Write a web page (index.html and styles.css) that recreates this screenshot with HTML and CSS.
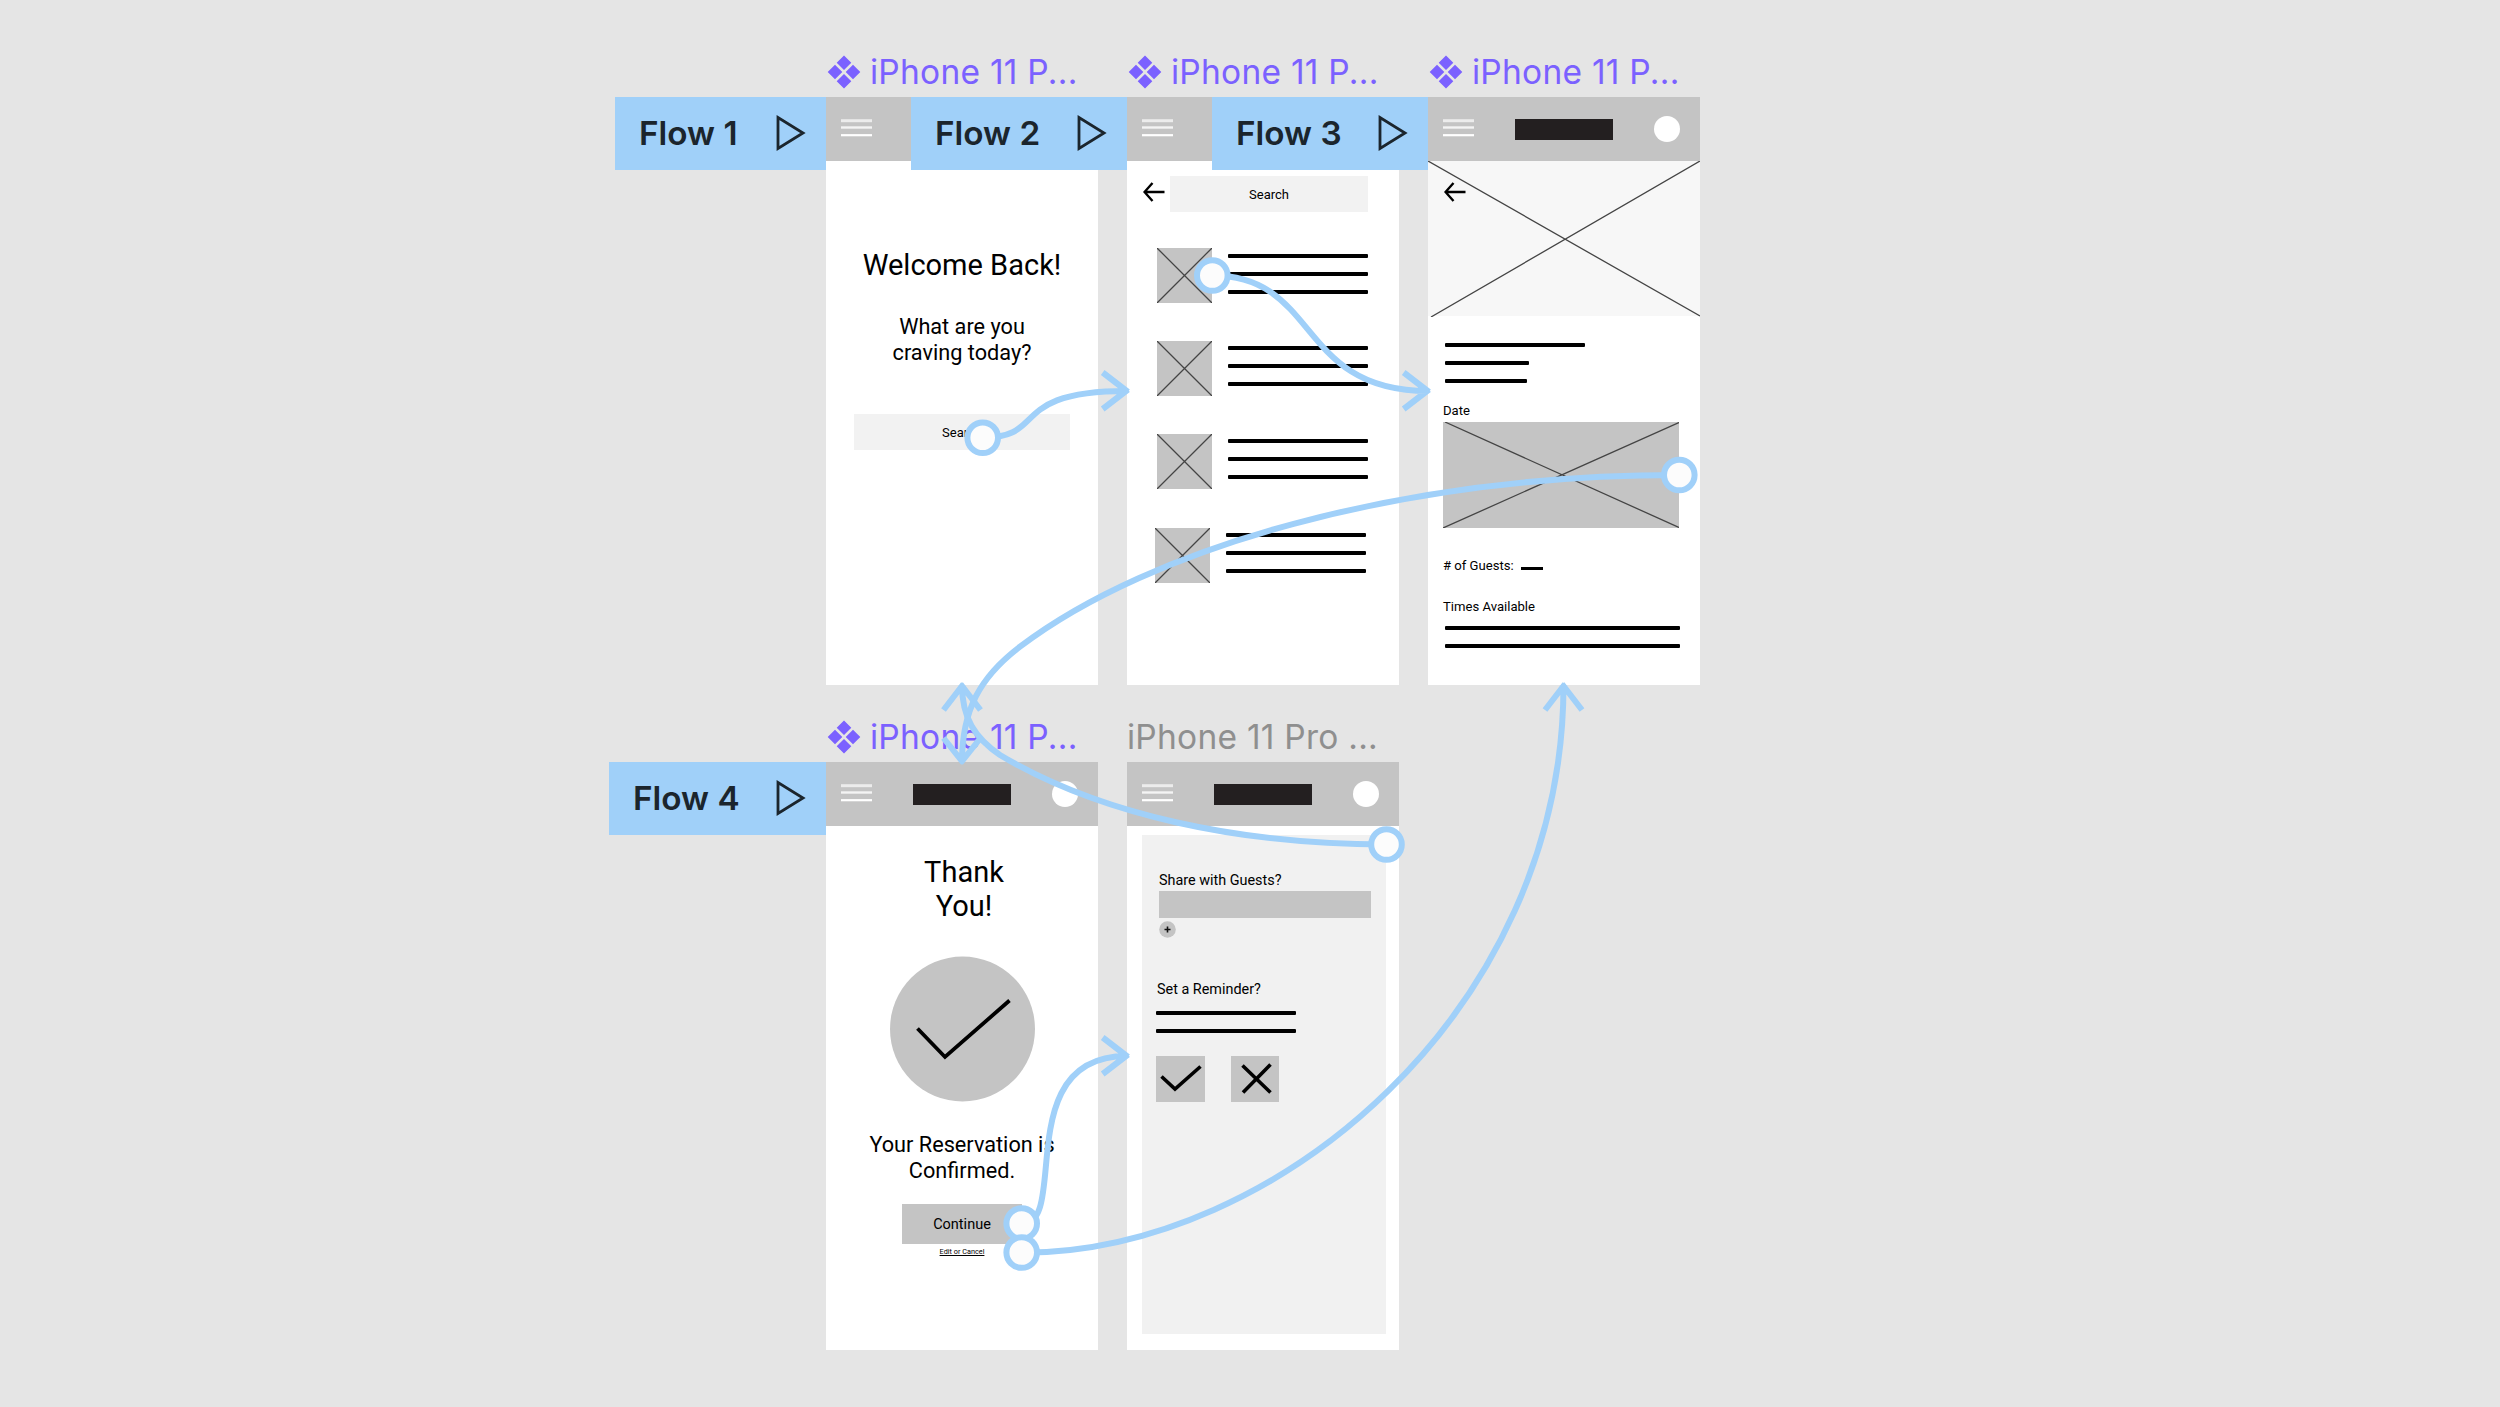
FILE: index.html
```html
<!DOCTYPE html>
<html lang="en">
<head>
    <meta charset="UTF-8">
    <meta name="viewport" content="width=device-width, initial-scale=1.0">
    <title>Restaurant App Prototype</title>
    <link rel="stylesheet" href="styles.css">
</head>
<body>

    <!-- Shared icons -->
    <svg class="symbols" width="0" height="0">
        <symbol id="component" viewBox="0 0 34 34">
            <path d="M17 .5l7.300 7.300-7.300 7.300-7.300-7.300zM8 9.700l7.300 7.300-7.300 7.300-7.300-7.300zM26 9.700l7.300 7.300-7.300 7.300-7.300-7.300zM17 18.900l7.300 7.300-7.300 7.300-7.300-7.300z" fill="#7b61ff"/>
        </symbol>
        <symbol id="play" viewBox="0 0 30 36">
            <path d="M2 2.500v31L27 18z" fill="none" stroke="#1b252d" stroke-width="2.800"/>
        </symbol>
        <symbol id="menu" viewBox="0 0 31 18">
            <path d="M0 1.700h31" stroke="#ececec" stroke-width="3"/>
            <path d="M0 8.500h31" stroke="#f4f4f4" stroke-width="2.400"/>
            <path d="M0 16.200h31" stroke="#fff" stroke-width="2.200"/>
        </symbol>
        <symbol id="back" viewBox="0 0 22 20">
            <path d="M21.500 10H2M9.500 1L1.500 10l8 9" fill="none" stroke="#000" stroke-width="2.400"/>
        </symbol>
        <symbol id="cross" viewBox="0 0 100 100" preserveAspectRatio="none">
            <path d="M0 0l100 100M100 0L0 100" stroke="#444" stroke-width="1.300" vector-effect="non-scaling-stroke"/>
        </symbol>
    </svg>

    <div class="board">

        <!-- Home -->
        <section class="frame">
            <div class="frame-label"><svg class="component"><use href="#component"/></svg>iPhone 11 P...</div>
            <div class="flow flow-1">Flow 1<svg class="play"><use href="#play"/></svg></div>
            <div class="screen home">
                <div class="header"><svg class="menu"><use href="#menu"/></svg></div>
                <h1>Welcome Back!</h1>
                <h2>What are you<br>craving today?</h2>
                <div class="search">Search</div>
            </div>
        </section>

        <!-- Results -->
        <section class="frame">
            <div class="frame-label"><svg class="component"><use href="#component"/></svg>iPhone 11 P...</div>
            <div class="flow flow-2">Flow 2<svg class="play"><use href="#play"/></svg></div>
            <div class="screen results">
                <div class="header"><svg class="menu"><use href="#menu"/></svg></div>
                <div class="search-row">
                    <svg class="back"><use href="#back"/></svg>
                    <div class="search">Search</div>
                </div>
                <div class="list">
                    <div class="item first">
                        <svg class="thumb"><use href="#cross"/></svg>
                        <div class="lines"><i></i><i></i><i></i></div>
                    </div>
                    <div class="item">
                        <svg class="thumb"><use href="#cross"/></svg>
                        <div class="lines"><i></i><i></i><i></i></div>
                    </div>
                    <div class="item">
                        <svg class="thumb"><use href="#cross"/></svg>
                        <div class="lines"><i></i><i></i><i></i></div>
                    </div>
                    <div class="item last">
                        <svg class="thumb"><use href="#cross"/></svg>
                        <div class="lines"><i></i><i></i><i></i></div>
                    </div>
                </div>
            </div>
        </section>

        <!-- Details -->
        <section class="frame">
            <div class="frame-label"><svg class="component"><use href="#component"/></svg>iPhone 11 P...</div>
            <div class="flow flow-3">Flow 3<svg class="play"><use href="#play"/></svg></div>
            <div class="screen details">
                <div class="header"><svg class="menu"><use href="#menu"/></svg><span class="logo"></span><span class="avatar"></span></div>
                <div class="hero">
                    <svg class="hero-cross" viewBox="0 0 272 156"><path d="M0 0l272 155M272 0L3 156" stroke="#444" stroke-width="1.300"/></svg>
                    <svg class="back"><use href="#back"/></svg>
                </div>
                <div class="lines summary"><i></i><i></i><i></i></div>
                <p class="date">Date</p>
                <svg class="calendar" viewBox="0 0 236 106"><path d="M2 0l234 105.500M236 .5L0 106" stroke="#444" stroke-width="1.300"/></svg>
                <p class="guests"># of Guests: <i></i></p>
                <p class="times">Times Available</p>
                <div class="lines slots"><i></i><i></i></div>
            </div>
        </section>

        <!-- Confirmation -->
        <section class="frame">
            <div class="frame-label"><svg class="component"><use href="#component"/></svg>iPhone 11 P...</div>
            <div class="flow flow-4">Flow 4<svg class="play"><use href="#play"/></svg></div>
            <div class="screen confirm">
                <div class="header"><svg class="menu"><use href="#menu"/></svg><span class="logo"></span><span class="avatar"></span></div>
                <h1>Thank<br>You!</h1>
                <svg class="done" viewBox="0 0 146 146">
                    <circle cx="72.500" cy="73" r="72.500" fill="#c4c4c4"/>
                    <path d="M27.500 72.500L55 101l64.500-56.500" fill="none" stroke="#000" stroke-width="3.800"/>
                </svg>
                <h2>Your Reservation is<br>Confirmed.</h2>
                <div class="continue">Continue</div>
                <div class="edit">Edit or Cancel</div>
            </div>
        </section>

        <!-- Share -->
        <section class="frame">
            <div class="frame-label plain">iPhone 11 Pro ...</div>
            <div class="screen share">
                <div class="header"><svg class="menu"><use href="#menu"/></svg><span class="logo"></span><span class="avatar"></span></div>
                <div class="panel">
                    <p>Share with Guests?</p>
                    <div class="field"></div>
                    <svg class="add" viewBox="0 0 17 17">
                        <circle cx="8.500" cy="8.500" r="8.300" fill="#c4c4c4"/>
                        <path d="M8.500 5.500v6M5.500 8.500h6" stroke="#111" stroke-width="1.600"/>
                    </svg>
                    <p class="reminder">Set a Reminder?</p>
                    <div class="lines"><i></i><i></i></div>
                    <div class="choices">
                        <svg viewBox="0 0 48.500 45.500"><path d="M5.500 20.500L19 33l25.500-22.500" fill="none" stroke="#000" stroke-width="3.600"/></svg>
                        <svg viewBox="0 0 48.500 45.500"><path d="M11.500 9.500l28 27M39.500 8.500L12 36.500" fill="none" stroke="#000" stroke-width="3.600"/></svg>
                    </div>
                </div>
            </div>
        </section>

        <!-- Prototype connections -->
        <svg class="connections" viewBox="0 0 2500 1407">
            <path d="M983 437.700C1048 437.700 1007 391 1127 391M1102.700 372.500L1128 392M1128 389.500l-25.300 19.500"/>
            <path d="M1212.300 275.500C1320 275.500 1296 391 1428 391M1403.700 372.500L1429 392M1429 389.500l-25.300 19.500"/>
            <path d="M1679.300 475C1400 475 1150 548 1020 646.700C980 677 962 710 962 762M943.500 738L963.500 763M960.500 763l20-25"/>
            <path d="M1386.500 844.500C1240 844.500 1100 815 1000 755C975 738 962 718 962 685M943.500 710L963.500 684M960.500 684l20 26"/>
            <path d="M1022 1224C1070 1224 1010 1056 1127 1056M1102.700 1037.500L1128 1057M1128 1054.500l-25.300 19.500"/>
            <path d="M1022 1252.700C1277 1252.700 1563.500 1010 1563.500 685M1545 710L1565 684M1562 684l20 26"/>
            <circle cx="982.700" cy="437.700" r="15.300"/>
            <circle cx="1212.300" cy="275.500" r="15.300"/>
            <circle cx="1679.300" cy="475" r="15.300"/>
            <circle cx="1386.500" cy="844.500" r="15.300"/>
            <circle cx="1021.700" cy="1223.500" r="15.300"/>
            <circle cx="1021.700" cy="1252.500" r="15.300"/>
        </svg>
    </div>

</body>
</html>
```
FILE: styles.css
```css
* {
    box-sizing: border-box;
}

body {
    margin: 0;
    background-color: #e5e5e5;
    font-family: 'Roboto', sans-serif;
    color: #000;
}

h1, h2, p {
    margin: 0;
    font-weight: 400;
}

svg {
    display: block;
    flex: none;
}

.symbols {
    position: absolute;
}

.board {
    position: relative;
    width: 2500px;
    height: 1407px;
    padding: 47px 0 0 826px;
    display: grid;
    grid-template-columns: repeat(3, 272px);
    grid-auto-rows: 638px;
    gap: 27px 29px;
    overflow: hidden;
}

/* Frames */
.frame {
    position: relative;
}

.frame-label {
    display: flex;
    align-items: center;
    height: 50px;
    padding-left: 1px;
    font-family: 'Inter', sans-serif;
    font-size: 33.5px;
    letter-spacing: 0.25px;
    color: #7b61ff;
    white-space: nowrap;
}

.frame-label.plain {
    padding-left: 0;
    color: #8f8f8f;
}

.component {
    width: 34px;
    height: 34px;
    margin-right: 9px;
}

.screen {
    display: flex;
    flex-direction: column;
    height: 588px;
    background-color: #fff;
}

.header {
    display: flex;
    align-items: center;
    flex: none;
    height: 64px;
    padding: 0 20px 0 15px;
    background-color: #c4c4c4;
}

.menu {
    width: 31px;
    height: 18px;
    margin-bottom: 2px;
}

.logo {
    width: 98px;
    height: 21px;
    margin-left: 41px;
    background-color: #231f20;
}

.avatar {
    width: 26px;
    height: 26px;
    margin-left: auto;
    border-radius: 50%;
    background-color: #fff;
}

/* Flow tags sit over the neighbouring frame */
.flow {
    position: absolute;
    z-index: 1;
    top: 50px;
    right: 272px;
    display: flex;
    align-items: center;
    justify-content: space-between;
    width: 216px;
    height: 73px;
    padding: 0 20px 1px 24px;
    background-color: #a0d0f9;
    font-family: 'Inter', sans-serif;
    font-size: 33.3px;
    font-weight: 600;
    color: #1b252d;
    white-space: nowrap;
}

.flow-1 {
    width: 211px;
}

.flow-4 {
    width: 217px;
}

.play {
    width: 30px;
    height: 36px;
}

/* Text */
h1 {
    font-size: 29px;
    line-height: 34px;
    text-align: center;
}

h2 {
    font-size: 21.7px;
    line-height: 26px;
    text-align: center;
}

p {
    font-size: 13.1px;
    line-height: 16px;
}

.search {
    display: flex;
    align-items: center;
    justify-content: center;
    height: 36px;
    background-color: #f2f2f2;
    font-size: 13px;
}

.lines {
    display: flex;
    flex-direction: column;
    gap: 14px;
}

.lines i {
    width: 140px;
    height: 4px;
    border-radius: 1px;
    background-color: #000;
}

.back {
    width: 22px;
    height: 20px;
}

/* Home */
.home h1 {
    margin-top: 87px;
}

.home h2 {
    margin-top: 32px;
}

.home .search {
    margin: 48px 28px 0;
}

/* Results */
.search-row {
    display: flex;
    align-items: center;
    gap: 5px;
    margin: 15px 0 0 16px;
}

.search-row .back {
    margin-bottom: 4px;
}

.search-row .search {
    width: 198px;
}

.list {
    display: flex;
    flex-direction: column;
    gap: 38px;
    margin: 36px 0 0 30px;
}

.item {
    display: flex;
    gap: 16px;
}

.item .lines {
    padding-top: 5px;
}

.item.first .lines {
    padding-top: 6px;
}

.item.last {
    margin: 1px 0 0 -2px;
}

.thumb {
    width: 55px;
    height: 55px;
    background-color: #c4c4c4;
}

/* Details */
.hero {
    position: relative;
    flex: none;
    height: 155px;
    padding: 21px 0 0 16px;
    background-color: #f7f7f7;
}

.hero-cross {
    position: absolute;
    top: 0;
    left: 0;
    width: 272px;
    height: 156px;
}

.summary {
    margin: 27px 0 0 17px;
}

.summary i:nth-child(2) {
    width: 84px;
}

.summary i:nth-child(3) {
    width: 82px;
}

.details p {
    margin-left: 15px;
}

.details .date {
    margin-top: 20px;
}

.calendar {
    width: 236px;
    height: 106px;
    margin: 3px 0 0 15px;
    background-color: #c4c4c4;
}

.details .guests {
    margin-top: 30px;
}

.guests i {
    display: inline-block;
    width: 22px;
    height: 3px;
    margin-left: 4px;
    background-color: #000;
}

.details .times {
    margin-top: 25px;
}

.slots {
    margin: 11px 0 0 17px;
}

.slots i {
    width: 235px;
}

/* Confirmation */
.confirm h1 {
    margin: 29px 0 0 4px;
}

.done {
    width: 146px;
    height: 146px;
    margin: 33px 0 0 64px;
}

.confirm h2 {
    margin-top: 30px;
}

.continue {
    display: flex;
    align-items: center;
    justify-content: center;
    width: 120px;
    height: 40px;
    margin: 20px 0 0 76px;
    background-color: #c4c4c4;
    font-size: 14.5px;
}

.edit {
    margin-top: 3px;
    font-size: 7.3px;
    line-height: 9px;
    text-align: center;
    text-decoration: underline;
}

/* Share */
.panel {
    width: 244px;
    height: 499px;
    margin: 9px 0 0 15px;
    padding: 37px 15px 0 14px;
    background-color: #f1f1f1;
}

.panel p {
    margin-left: 3px;
    font-size: 14.4px;
    line-height: 17px;
}

.field {
    height: 27px;
    margin: 2px 0 0 3px;
    background-color: #c4c4c4;
}

.add {
    width: 17px;
    height: 17px;
    margin: 3px 0 0 3px;
}

.panel .reminder {
    margin: 43px 0 0 1px;
}

.panel .lines {
    margin-top: 13px;
}

.choices {
    display: flex;
    gap: 26px;
    margin-top: 23px;
}

.choices svg {
    width: 48.5px;
    height: 45.5px;
    background-color: #c4c4c4;
}

/* Connections */
.connections {
    position: absolute;
    top: 0;
    left: 0;
    width: 2500px;
    height: 1407px;
    fill: none;
    stroke: #a0d0f9;
    stroke-width: 6;
}

.connections circle {
    fill: #fcfcfc;
}
```
